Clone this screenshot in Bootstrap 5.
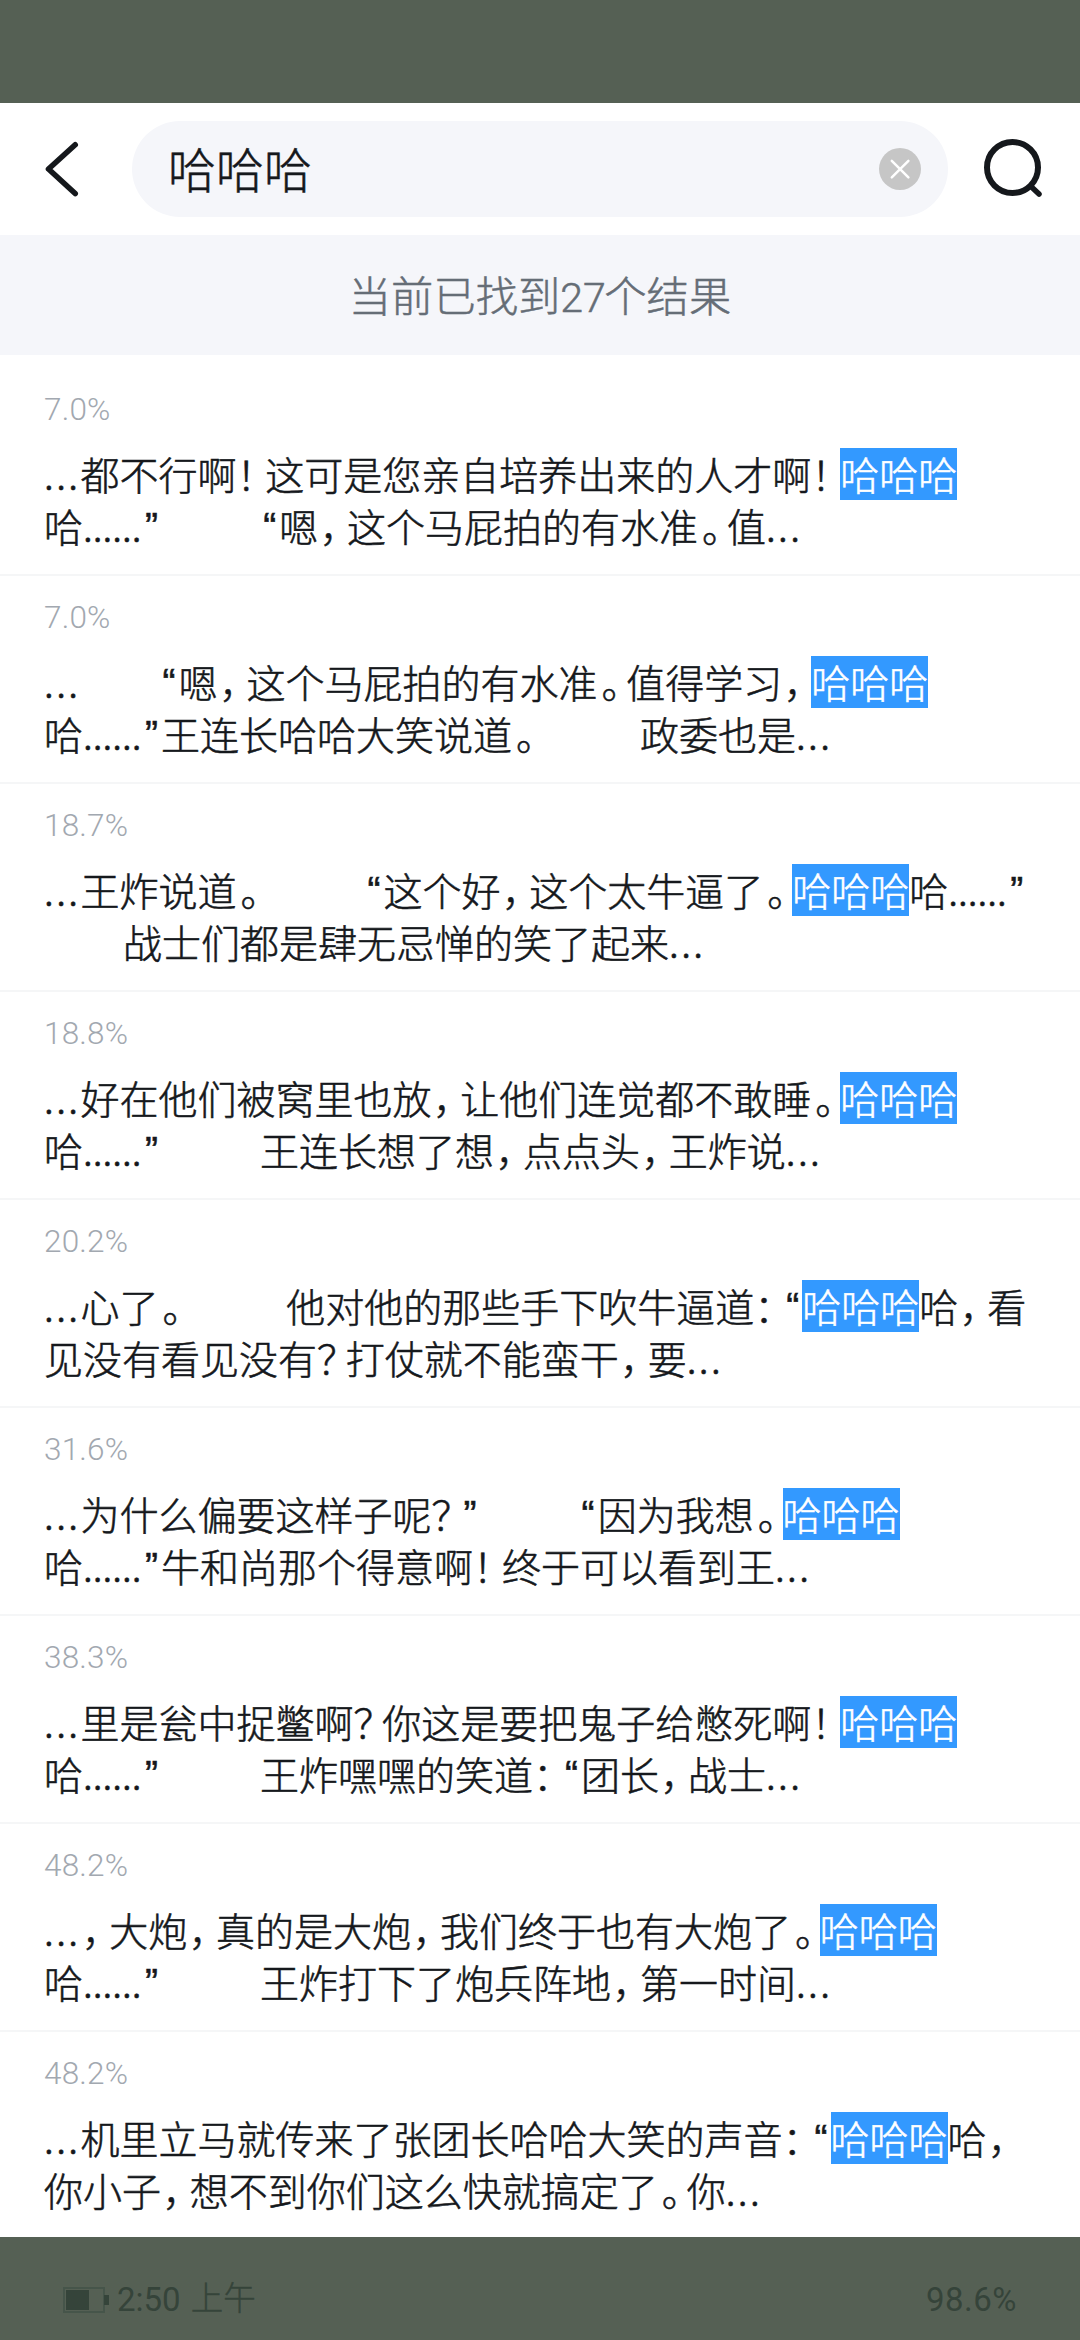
<!DOCTYPE html>
<html lang="zh-CN">
<head>
<meta charset="utf-8">
<meta name="viewport" content="width=device-width, initial-scale=1">
<title>搜索</title>
<link href="https://cdn.jsdelivr.net/npm/bootstrap@5.3.0/dist/css/bootstrap.min.css" rel="stylesheet">
<style>
body{font-family:"Noto Sans CJK SC",sans-serif;font-weight:300;color:#15181c;background:#556054;height:2340px;overflow:hidden}
.status-area{height:103px;background:#556054}
.search-head{height:132px;padding-left:44px;padding-right:36px}
.icon-back{width:36px;height:60px;margin-right:52px}
.search-pill{width:816px;height:96px;background:#f5f6fa;padding-left:36px;padding-right:27px;font-size:48px;line-height:92px;margin-right:34px}
.keyword{height:96px;-webkit-text-stroke:.5px}
.icon-find{width:62px;height:62px}
.result-count{height:120px;line-height:118px;background:#f5f6fa;font-size:42.3px;color:#656d76;-webkit-text-stroke:.5px}
.count-num{display:inline-block;width:44px;text-align:center;font-family:Roboto,sans-serif;font-size:41px}
.result-list{height:1882px;padding-top:13px}
.result-item{height:208px;padding:24px 44px 0;border-bottom:2px solid #f5f6f7;flex:none}
.pct{font-family:Roboto,sans-serif;font-size:31.5px;line-height:36px;height:56px;color:#a2a8b0;letter-spacing:.2px}
.ln{height:52px;line-height:50px;font-size:39px;white-space:nowrap;-webkit-text-stroke:.55px}
.ln span{display:inline-block;height:52px;vertical-align:top}
.hit{background:#39f;color:#fff}
.p{width:28.8px;font-feature-settings:"halt"}
.ln .comma{padding-left:1.5px}
.ln .stop{padding-left:4px}
.q{width:19.2px;text-align:center;font-family:"Liberation Sans",sans-serif;line-height:53px}
.e{width:36.5px;letter-spacing:2.4px}
.d{width:58.9px;letter-spacing:0}
.s{width:99px}
.t{width:79px}
.page-foot{height:103px;padding:43px 63px 0 63px;color:#35443a;font-family:Roboto,"Noto Sans CJK SC",sans-serif;font-size:33px;font-weight:400}
.foot-row{height:39px;line-height:39px}
.battery{width:46px;height:26px;margin-right:8px}
.ampm{font-size:32.5px;margin-left:10px;font-weight:300;-webkit-text-stroke:.4px}
.progress-text{letter-spacing:.5px}
</style>
</head>
<body>
<div class="status-area"></div>
<header class="search-head bg-white d-flex align-items-center">
<svg class="icon-back" viewBox="44 139 36 60" fill="none" stroke="#15181c" stroke-width="5.6" stroke-linecap="round" stroke-linejoin="round"><path d="M75.2 144.8 48.5 169l26.7 24.5"/></svg>
<div class="search-pill rounded-pill d-flex align-items-center justify-content-between"><div class="keyword">哈哈哈</div>
<svg width="42" height="42" viewBox="0 0 42 42"><circle cx="21" cy="21" r="21" fill="#c6c6c6"/><path d="m12.8 12.8 16.6 16.6m0-16.6L12.8 29.4" stroke="#fff" stroke-width="2.5" stroke-linecap="round"/></svg></div>
<svg class="icon-find" viewBox="982 138 62 62" fill="none" stroke="#15181c" stroke-width="6"><circle cx="1012.5" cy="167.5" r="25.5"/><path d="m1031 186.5 8 7.5" stroke-width="5.5" stroke-linecap="round"/></svg>
</header>
<div class="result-count text-center">当前已找到<span class="count-num">27</span>个结果</div>
<main class="result-list bg-white overflow-hidden d-flex flex-column" id="results"></main>
<footer class="page-foot d-flex justify-content-between">
<div class="foot-row d-flex align-items-center"><svg class="battery" viewBox="0 0 46 26"><rect x="1" y="1" width="40" height="24" fill="none" stroke="#46554a" stroke-width="2"/><path d="M3 3h23v20H3zM41 8h5v10h-5z" fill="#35443a"/></svg><span>2:50</span><span class="ampm">上午</span></div>
<div class="foot-row progress-text">98.6%</div>
</footer>
<script>
// [ ] wraps the matched keyword; _ is a paragraph break, = a first-line indent
const rows=[
["7.0%","…都不行啊！这可是您亲自培养出来的人才啊！[哈哈哈]","哈……”_“嗯，这个马屁拍的有水准。值…"],
["7.0%","…=“嗯，这个马屁拍的有水准。值得学习，[哈哈哈]","哈……”王连长哈哈大笑说道。_政委也是…"],
["18.7%","…王炸说道。_“这个好，这个太牛逼了。[哈哈哈]哈……”","=战士们都是肆无忌惮的笑了起来…"],
["18.8%","…好在他们被窝里也放，让他们连觉都不敢睡。[哈哈哈]","哈……”_王连长想了想，点点头，王炸说…"],
["20.2%","…心了。_他对他的那些手下吹牛逼道：“[哈哈哈]哈，看","见没有看见没有？打仗就不能蛮干，要…"],
["31.6%","…为什么偏要这样子呢？”_“因为我想。[哈哈哈]","哈……”牛和尚那个得意啊！终于可以看到王…"],
["38.3%","…里是瓮中捉鳖啊？你这是要把鬼子给憋死啊！[哈哈哈]","哈……”_王炸嘿嘿的笑道：“团长，战士…"],
["48.2%","…，大炮，真的是大炮，我们终于也有大炮了。[哈哈哈]","哈……”_王炸打下了炮兵阵地，第一时间…"],
["48.2%","…机里立马就传来了张团长哈哈大笑的声音：“[哈哈哈]哈，","你小子，想不到你们这么快就搞定了。你…"]];
const span=(c,t="")=>`<span class="${c}">${t}</span>`;
const line=t=>'<div class="ln">'+t.replace(/……|…|[，。！？：“”_=\[\]]/g,m=>({
 "……":span("d","......"),"…":span("e","..."),"_":span("s"),"=":span("t"),
 "[":'<span class="hit">',"]":"</span>","“":span("q",m),"”":span("q",m),
 "，":span("p comma",m),"。":span("p stop",m)})[m]||span("p",m))+'</div>';
document.getElementById("results").innerHTML=rows.map(r=>`<article class="result-item"><div class="pct">${r[0]}</div>${line(r[1])}${line(r[2])}</article>`).join("");
</script>
<script src="https://cdn.jsdelivr.net/npm/bootstrap@5.3.0/dist/js/bootstrap.bundle.min.js"></script>
</body>
</html>
